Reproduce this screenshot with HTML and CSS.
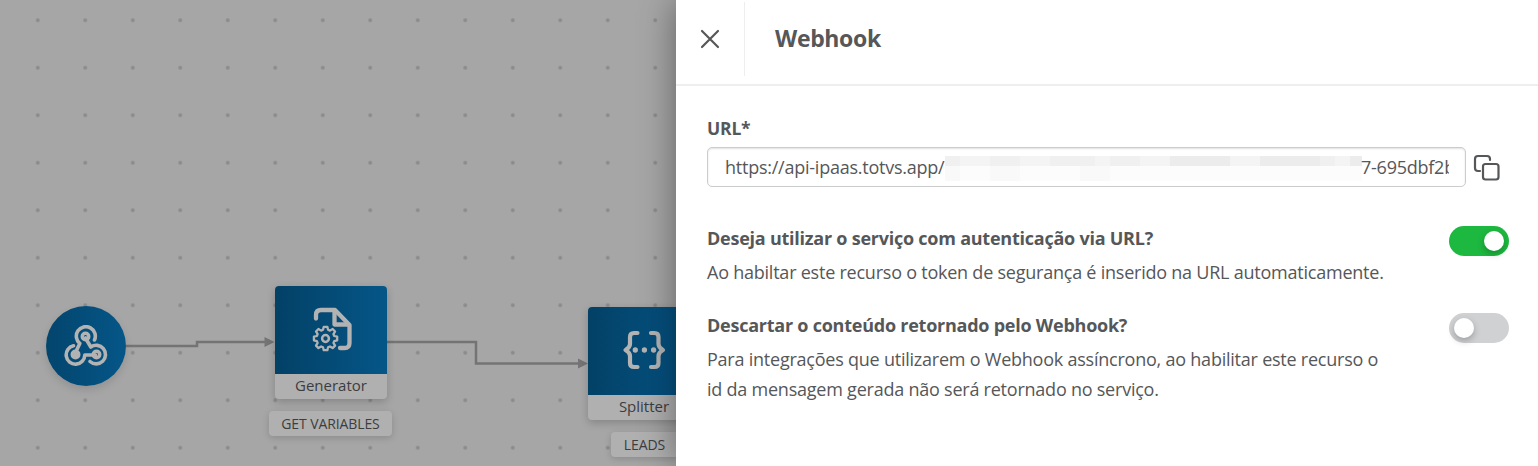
FILE: index.html
```html
<!DOCTYPE html>
<html lang="pt-BR">
<head>
<meta charset="utf-8">
<title>Webhook</title>
<link rel="stylesheet" href="styles.css">
</head>
<body>
<div class="app">
  <main class="canvas">
    <svg class="backdrop" width="676" height="466">
      <defs>
        <pattern id="dots" x="14" y="-3.5" width="47.5" height="47.5" patternUnits="userSpaceOnUse">
          <circle cx="23.75" cy="23.75" r="1.9" fill="#8b8b8b"/>
        </pattern>
      </defs>
      <rect width="676" height="466" fill="url(#dots)"/>
      <g fill="none" stroke="#747475" stroke-width="2.500">
        <path d="M126 346H197V342H266"/>
        <path d="M387 342H476V363.5H579"/>
      </g>
      <path d="M264.500 337V347L274.500 342Z M578 358.500V368.500L588 363.500Z" fill="#747475"/>
    </svg>
    <div class="trigger">
      <svg width="44" height="42" viewBox="0 0 44 42" fill="none" stroke="#b3b3b3" stroke-width="3.600" stroke-linecap="round" stroke-linejoin="round">
        <path d="M30.500 15A9.500 9.500 0 1 0 15.800 18.500L11.500 27.500"/>
        <path d="M9.500 20.800A9.300 9.300 0 1 0 20.800 30H31.500"/>
        <path d="M26 36.500A9.300 9.300 0 1 0 26.800 22L21.500 13"/>
        <circle cx="21.500" cy="11.500" r="3.200"/>
        <circle cx="11.500" cy="29.500" r="3.200" fill="#b3b3b3"/>
        <circle cx="32.500" cy="29.500" r="3.200"/>
      </svg>
    </div>
    <div class="node generator">
      <div class="node-icon">
        <svg width="112" height="88" viewBox="0 0 112 88" fill="none" stroke="#b3b3b3" stroke-width="4.300" stroke-linecap="round" stroke-linejoin="round">
          <path d="M41 32.500V29Q41 24 46 24H60L74.500 39V57Q74.500 62 69.500 62H65"/>
          <path d="M59.500 25V38.500H73"/>
          <path stroke-width="2.500" d="M48.600 42.400h4l.8 3.200 2 .9 3-1.800 2.700 2.700-1.800 3 .9 2 3.200.8v4l-3.200.8-.9 2 1.800 3-2.700 2.700-3-1.800-2 .9-.8 3.200h-4l-.8-3.200-2-.9-3 1.800-2.700-2.700 1.800-3-.9-2-3.200-.8v-4l3.200-.8.9-2-1.800-3 2.700-2.700 3 1.800 2-.9z" transform="translate(4.500 2.300) scale(.91)"/>
          <circle cx="50.500" cy="52.500" r="3.400" stroke-width="2.500"/>
        </svg>
      </div>
      <div class="node-name">Generator</div>
    </div>
    <div class="tag tag-generator">GET VARIABLES</div>
    <div class="node splitter">
      <div class="node-icon">
        <svg width="112" height="88" viewBox="0 0 112 88" fill="none" stroke="#b3b3b3" stroke-width="4.200" stroke-linecap="round" stroke-linejoin="round">
          <path d="M49.500 26H46Q42 26 42 30V37Q42 40.500 37.500 43Q42 45.500 42 49V56Q42 60 46 60H49.500"/>
          <path d="M63 26H66.500Q70.500 26 70.500 30V37Q70.500 40.500 75 43Q70.500 45.500 70.500 49V56Q70.500 60 66.500 60H63"/>
          <path stroke-width="5.300" d="M47.300 43h.01M56.400 43h.01M65.600 43h.01"/>
        </svg>
      </div>
      <div class="node-name">Splitter</div>
    </div>
    <div class="tag tag-splitter">LEADS</div>
  </main>
  <aside class="drawer">
    <header class="drawer-head">
      <button class="close" aria-label="Fechar">
        <svg width="20" height="20" viewBox="0 0 20 20"><path d="M2 2L18 18M18 2L2 18" fill="none" stroke="#555759" stroke-width="2.200" stroke-linecap="round"/></svg>
      </button>
      <h1>Webhook</h1>
    </header>
    <section class="content">
      <div class="label">URL*</div>
      <div class="url-row">
        <div class="url-field">
          <span>https://api-ipaas.totvs.app/</span>
          <svg class="redacted" width="417" height="25" shape-rendering="crispEdges">
            <path fill="#fcfcfc" d="M0 10H417V25H0z"/>
            <path fill="#f9f9f9" d="M0 10H15V25H0zM45 10H75V25H45zM135 10H165V25H135z"/>
            <path fill="#f0f0f0" d="M0 0H417V10H0z"/>
            <path fill="#f4f4f4" d="M15 0H45V10H15zM75 0H105V10H75zM150 0H165V10H150zM195 0H225V10H195zM285 0H315V10H285zM390 0H405V10H390z"/>
            <path fill="#ececec" d="M225 0H285V10H225zM315 0H375V10H315zM405 0H417V10H405z"/>
          </svg>
          <span class="url-end">7-695dbf2b</span>
        </div>
        <svg class="copy" width="28" height="28" viewBox="0 0 28 28" fill="none" stroke="#555759" stroke-width="2.200" stroke-linecap="round">
          <path d="M7 17H5Q2 17 2 14V5Q2 2 5 2H14Q17 2 17 5V6"/>
          <rect x="10" y="10" width="15.500" height="15.500" rx="2.500"/>
        </svg>
      </div>
      <div class="option">
        <div class="option-text">
          <h2>Deseja utilizar o serviço com autenticação via URL?</h2>
          <p>Ao habiltar este recurso o token de segurança é inserido na URL automaticamente.</p>
        </div>
        <div class="switch on"><i></i></div>
      </div>
      <div class="option">
        <div class="option-text">
          <h2>Descartar o conteúdo retornado pelo Webhook?</h2>
          <p>Para integrações que utilizarem o Webhook assíncrono, ao habilitar este recurso o<br>id da mensagem gerada não será retornado no serviço.</p>
        </div>
        <div class="switch"><i></i></div>
      </div>
    </section>
  </aside>
</div>
</body>
</html>
```
FILE: styles.css
```css
* { box-sizing: border-box; }
body { margin: 0; overflow: hidden; color: #555759; font-family: "Open Sans", "Noto Sans", sans-serif; }
h1, h2, p { margin: 0; }
.app { display: flex; width: 1538px; height: 466px; }
.canvas { position: relative; width: 676px; overflow: hidden; background: #a6a6a6; }
.backdrop { display: block; }
.trigger { position: absolute; left: 46px; top: 306px; display: flex; align-items: center; justify-content: center; width: 80px; height: 80px; border-radius: 50%; background: linear-gradient(90deg, #03456d, #055688); box-shadow: 0 4px 8px rgba(0,0,0,.12); }
.node { position: absolute; width: 112px; height: 113px; border-radius: 4px; overflow: hidden; background: #b0b0b0; box-shadow: 0 3px 9px rgba(0,0,0,.2); }
.generator { left: 275px; top: 286px; }
.splitter { left: 588px; top: 307px; }
.node-icon { height: 88px; background: linear-gradient(90deg, #034166, #055688); }
.node-icon svg { display: block; }
.node-name { height: 25px; color: #3c3d3f; font-size: 15px; line-height: 22px; text-align: center; }
.tag { position: absolute; height: 25px; border-radius: 4px; background: #b0b0b0; color: #3c3d3f; font-size: 14px; line-height: 25px; letter-spacing: -.1px; text-align: center; white-space: nowrap; box-shadow: 0 2px 7px rgba(0,0,0,.16); }
.tag-generator { left: 269px; top: 411px; width: 123px; }
.tag-splitter { left: 611px; top: 432px; width: 67px; }
.drawer { position: relative; width: 862px; background: #fff; box-shadow: 0 0 34px rgba(0,0,0,.42); }
.drawer-head { display: flex; align-items: center; height: 86px; padding-bottom: 6px; border-bottom: 2px solid #eeeeef; }
.close { display: flex; align-items: center; justify-content: center; width: 69px; height: 74px; padding: 0; border: 0; border-right: 1px solid #eeeeef; background: none; }
.drawer-head h1 { padding: 0 0 2px 30px; font-size: 23px; line-height: 32px; font-weight: 700; letter-spacing: -.35px; }
.content { padding: 30px 29px 0 31px; }
.label { font-size: 17.500px; line-height: 24px; font-weight: 700; letter-spacing: -.2px; }
.url-row { display: flex; align-items: center; gap: 7px; margin-top: 7px; }
.url-field { display: flex; align-items: center; width: 759px; height: 40px; padding: 0 16px 0 17px; border: 1px solid #cbcccd; border-radius: 5px; box-shadow: inset 0 1px 2px rgba(0,0,0,.12); font-size: 18px; line-height: 28px; white-space: nowrap; overflow: hidden; }
.copy { flex: none; margin-top: 2px; }
.url-field > span:first-child { width: 220px; flex: none; letter-spacing: -.24px; }
.redacted { flex: none; margin-top: 3px; }
.url-end { flex: none; width: 88px; overflow: hidden; margin-left: -1px; letter-spacing: -.24px; }
.option { display: flex; justify-content: space-between; margin-top: 36px; }
.option + .option { margin-top: 23px; }
.option h2 { font-size: 18px; line-height: 30px; font-weight: 700; letter-spacing: -.24px; }
.option p { margin-top: 4px; font-size: 18px; line-height: 30px; letter-spacing: -.23px; white-space: nowrap; }
.switch { display: flex; align-items: center; width: 60px; height: 30px; margin-top: 3px; padding: 0 5px; border-radius: 15px; background: #d0d1d3; }
.switch.on { justify-content: flex-end; background: #1db83f; }
.switch i { width: 20px; height: 20px; border-radius: 50%; background: #fff; box-shadow: 0 3px 7px rgba(0,0,0,.25); }
```
